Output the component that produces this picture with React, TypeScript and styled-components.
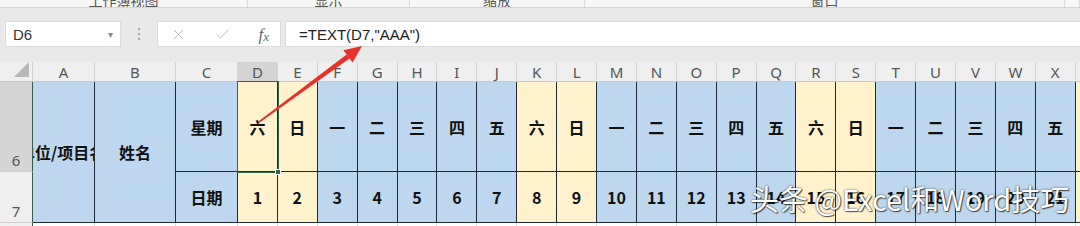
import styled, { createGlobalStyle } from "styled-components";
import { X, Check } from "lucide-react";

const GlobalStyle = createGlobalStyle`
  html, body {
    margin: 0;
    padding: 0;
  }
  body {
    background: #e9e9e9;
    overflow: hidden;
    font-family: "Liberation Sans", Arial, sans-serif;
  }
  * {
    box-sizing: border-box;
  }
`;

const WEEK = ["一", "二", "三", "四", "五", "六", "日"];
const COLS = "DEFGHIJKLMNOPQRSTUVWXY".split("");

const days = COLS.map((col, i) => {
  const wd = WEEK[(i + 5) % 7];
  return { col, day: i + 1, wd, weekend: wd === "六" || wd === "日" };
});

const groups = [
  { label: "工作簿视图", width: 248 },
  { label: "显示", width: 162 },
  { label: "缩放", width: 175 },
  { label: "窗口", width: 480 },
  { label: "", width: 15 },
];

const App = () => {
  return (
    <>
      <GlobalStyle />
      <Screen>
        <Ribbon>
          {groups.map((g, i) => (
            <RibbonGroup key={i} $width={g.width}>
              <span>{g.label}</span>
            </RibbonGroup>
          ))}
        </Ribbon>

        <FormulaBar>
          <NameBox>
            <span>D6</span>
            <Caret>▾</Caret>
          </NameBox>
          <Grip>
            <svg width="4" height="14" viewBox="0 0 4 14">
              <circle cx="2" cy="2" r="1.2" fill="#a8a8a8" />
              <circle cx="2" cy="7" r="1.2" fill="#a8a8a8" />
              <circle cx="2" cy="12" r="1.2" fill="#a8a8a8" />
            </svg>
          </Grip>
          <FxBox>
            <X size={17} strokeWidth={1.4} color="#b9b9b9" />
            <Check size={17} strokeWidth={1.4} color="#b9b9b9" />
            <Fx>
              f<sub>x</sub>
            </Fx>
          </FxBox>
          <FormulaInput>=TEXT(D7,"AAA")</FormulaInput>
        </FormulaBar>

        <Sheet>
          <Corner>
            <svg width="16" height="16" viewBox="0 0 16 16">
              <polygon points="15,0 15,15 0,15" fill="#b8b8b8" />
            </svg>
          </Corner>
          <ColHead>A</ColHead>
          <ColHead>B</ColHead>
          <ColHead>C</ColHead>
          {days.map((d) => (
            <ColHead key={d.col} $active={d.col === "D"}>
              {d.col}
            </ColHead>
          ))}

          <RowHead $active>6</RowHead>
          <MergedCell $fill="blue" $span={2} $clip>
            <ClippedText $offset={-14}>单位/项目名称</ClippedText>
          </MergedCell>
          <MergedCell $fill="blue" $span={2}>
            <span>姓名</span>
          </MergedCell>
          <Cell $fill="blue">星期</Cell>
          {days.map((d) => (
            <Cell
              key={d.col}
              $fill={d.weekend ? "yellow" : "blue"}
              $selected={d.col === "D"}
            >
              {d.wd}
              {d.col === "D" && <FillHandle />}
            </Cell>
          ))}

          <RowHead>7</RowHead>
          <Cell $fill="blue">日期</Cell>
          {days.map((d) => (
            <Cell key={d.col} $fill={d.weekend ? "yellow" : "blue"}>
              {d.day}
            </Cell>
          ))}

          <RowHead />
          <BlankCell />
          <BlankCell />
          <BlankCell />
          {days.map((d) => (
            <BlankCell key={d.col} />
          ))}
        </Sheet>

        <Watermark>头条 @Excel和Word技巧</Watermark>

        <Arrow width="1080" height="226" viewBox="0 0 1080 226">
          <polygon
            points="258.6,121.2 259.4,122.8 349.6,58.6 346.6,54.4"
            fill="#e8312a"
          />
          <polygon points="362,46 352.6,62.4 343.4,50.2" fill="#e8312a" />
        </Arrow>
      </Screen>
    </>
  );
};

export default App;

const Screen = styled.div`
  position: relative;
  width: 1080px;
  height: 226px;
  overflow: hidden;
  background: #e9e9e9;
`;

const Ribbon = styled.div`
  display: flex;
  height: 8px;
  overflow: hidden;
  background: #f7f7f7;
  border-bottom: 1px solid #d6d6d6;
`;

const RibbonGroup = styled.div<{ $width: number }>`
  flex: 0 0 ${(p) => p.$width}px;
  display: flex;
  align-items: flex-end;
  justify-content: center;
  border-right: 1px solid #d9d9d9;
  font-family: "Noto Sans CJK SC", sans-serif;
  font-size: 14px;
  line-height: 14px;
  color: #555;
`;

const FormulaBar = styled.div`
  display: flex;
  align-items: stretch;
  height: 54px;
  padding: 13px 0 15px 5px;
  background: #e9e9e9;
`;

const NameBox = styled.div`
  flex: 0 0 116px;
  display: flex;
  align-items: center;
  justify-content: space-between;
  padding: 0 7px 0 7px;
  background: #fff;
  border: 1px solid #dcdcdc;
  font-family: "Liberation Sans", Arial, sans-serif;
  font-size: 15px;
  color: #333;
`;

const Caret = styled.span`
  font-size: 10px;
  color: #8a8a8a;
`;

const Grip = styled.div`
  flex: 0 0 36px;
  display: flex;
  align-items: center;
  justify-content: center;
`;

const FxBox = styled.div`
  flex: 0 0 124px;
  display: flex;
  align-items: center;
  justify-content: space-between;
  padding: 0 11px 0 12px;
  background: #fff;
  border: 1px solid #dcdcdc;
`;

const Fx = styled.span`
  font-family: "Liberation Serif", "Times New Roman", serif;
  font-style: italic;
  font-size: 17px;
  color: #666;
  line-height: 1;

  & > sub {
    font-size: 13px;
    vertical-align: -1px;
  }
`;

const FormulaInput = styled.div`
  flex: 1;
  margin-left: 4px;
  display: flex;
  align-items: center;
  padding-left: 13px;
  background: #fff;
  border: 1px solid #dcdcdc;
  border-right: none;
  font-family: "Liberation Sans", Arial, sans-serif;
  font-size: 15px;
  color: #222;
`;

const Sheet = styled.div`
  display: grid;
  grid-template-columns: 33px 62px 81px 62px repeat(22, 39.9px);
  grid-template-rows: 20px 90px 51px 30px;
  background: #fff;
`;

const Corner = styled.div`
  display: flex;
  align-items: flex-end;
  justify-content: flex-end;
  padding: 0 2px 3px 0;
  background: #efefef;
  border-right: 1px solid #d0d0d0;
  border-bottom: 1px solid #c9c9c9;
`;

const ColHead = styled.div<{ $active?: boolean }>`
  display: flex;
  align-items: center;
  justify-content: center;
  background: ${(p) => (p.$active ? "#d4d4d4" : "#efefef")};
  border-right: 1px solid #d4d4d4;
  border-bottom: 1px solid ${(p) => (p.$active ? "#6f8f7a" : "#c9c9c9")};
  font-family: "Noto Sans", "Liberation Sans", sans-serif;
  font-size: 15px;
  color: #555;
`;

const RowHead = styled.div<{ $active?: boolean }>`
  display: flex;
  align-items: flex-end;
  justify-content: center;
  padding-bottom: 1px;
  background: ${(p) => (p.$active ? "#d5d5d5" : "#efefef")};
  border-right: 1px solid #3b5a48;
  border-bottom: 1px solid #d0d0d0;
  font-family: "Noto Sans", "Liberation Sans", sans-serif;
  font-size: 15px;
  color: #555;
`;

const fills = {
  blue: "#bdd7ee",
  yellow: "#fff2cc",
};

const Cell = styled.div<{ $fill: "blue" | "yellow"; $selected?: boolean }>`
  position: relative;
  z-index: ${(p) => (p.$selected ? 2 : 0)};
  display: flex;
  align-items: center;
  justify-content: center;
  background: ${(p) => fills[p.$fill]};
  border-right: 1px solid #1d2a36;
  border-bottom: 1px solid #1d2a36;
  box-shadow: ${(p) => (p.$selected ? "0 0 0 1px #2e6b45" : "none")};
  font-family: "Noto Sans CJK SC", "Noto Sans", sans-serif;
  font-weight: 700;
  font-size: 16px;
  color: #111;
  white-space: nowrap;
`;

const MergedCell = styled(Cell)<{ $span: number; $clip?: boolean }>`
  grid-row: span ${(p) => p.$span};
  overflow: hidden;
  justify-content: ${(p) => (p.$clip ? "flex-start" : "center")};
`;

const ClippedText = styled.span<{ $offset: number }>`
  flex: none;
  margin-left: ${(p) => p.$offset}px;
`;

const BlankCell = styled.div`
  background: #fff;
  border-right: 1px solid #d9d9d9;
`;

const FillHandle = styled.span`
  position: absolute;
  right: -4px;
  bottom: -4px;
  width: 6px;
  height: 6px;
  background: #2e6b45;
  border: 1px solid #fff;
`;

const Watermark = styled.div`
  position: absolute;
  z-index: 5;
  left: 750px;
  top: 184px;
  font-family: "Noto Sans CJK SC", sans-serif;
  font-size: 29px;
  line-height: 29px;
  color: #fff;
  white-space: nowrap;
  text-shadow: 0 0 2px rgba(0, 0, 0, 0.75), 1px 1px 1px rgba(0, 0, 0, 0.6);
  pointer-events: none;
`;

const Arrow = styled.svg`
  position: absolute;
  z-index: 6;
  left: 0;
  top: 0;
  pointer-events: none;
`;
